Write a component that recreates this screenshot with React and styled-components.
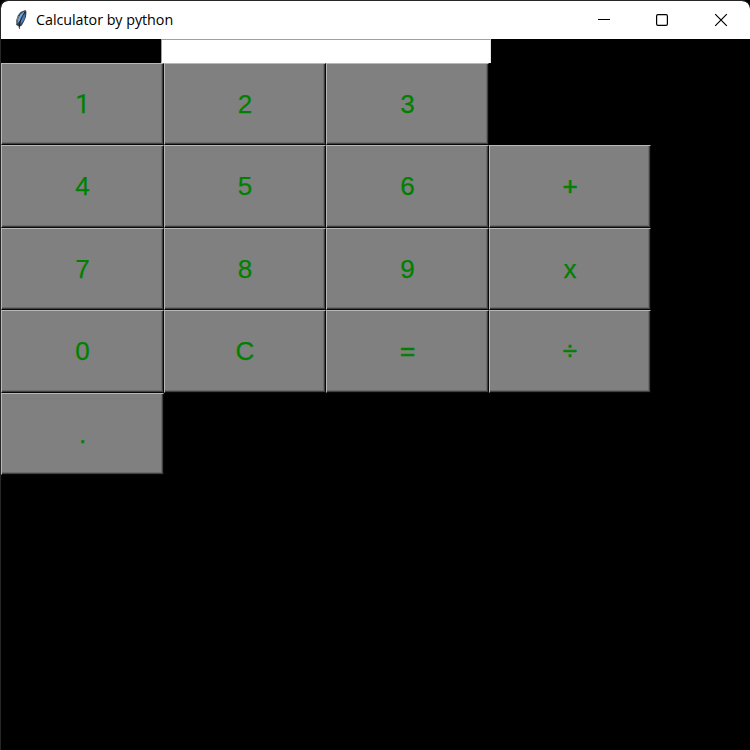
import React from "react";
import styled, { createGlobalStyle } from "styled-components";

const GlobalStyle = createGlobalStyle`
  * { box-sizing: border-box; }
  body { margin: 0; background: #000; overflow: hidden; }
`;

const Window = styled.main`
  display: flex;
  flex-direction: column;
  width: 750px;
  height: 750px;
  background: #000;
  border-left: 1px solid #262626;
  border-top: 1px solid #262626;
  border-radius: 8px 8px 0 0;
  overflow: hidden;
`;

const TitleBar = styled.header`
  display: flex;
  align-items: center;
  flex: none;
  height: 38px;
  padding-left: 12px;
  background: #fff;
  border-radius: 7px 8px 0 0;
`;

const Title = styled.h1`
  flex: 1;
  margin: 0 0 0 7px;
  font: 400 14.3px/20px "Open Sans", "Noto Sans", sans-serif;
  letter-spacing: -0.03px;
  color: #000;
  white-space: nowrap;
`;

const Controls = styled.div`
  display: flex;
`;

const Control = styled.button`
  display: flex;
  align-items: center;
  justify-content: center;
  width: ${(p) => p.$width}px;
  height: 38px;
  padding: 0;
  border: 0;
  background: none;
`;

const Body = styled.section`
  display: flex;
  flex-direction: column;
  align-items: flex-start;
  flex: 1;
`;

const Display = styled.input`
  width: 330px;
  height: 24px;
  margin-left: 160px;
  padding: 0 4px;
  border: 1px solid;
  border-color: #a0a0a0 #e3e3e3 #fff #a0a0a0;
  border-radius: 0;
  outline: 0;
  background: #fff;
`;

const Keypad = styled.div`
  display: grid;
  grid-template-columns: 163px 162px 163px 162px;
  grid-template-rows: 82px 83px 82px 83px 82px;
`;

const Key = styled.button`
  grid-column: ${(p) => p.$col};
  grid-row: ${(p) => p.$row};
  display: flex;
  align-items: center;
  justify-content: center;
  padding: 0 0 1px;
  border: 1px solid;
  border-color: #b8b8b8 #080808 #080808 #b8b8b8;
  border-radius: 0;
  box-shadow: inset -1px -1px #404040, inset -2px -2px #6c6c6c;
  background: #808080;
  color: #008000;
  font: 400 26px/30px ${(p) => (p.$plainStem ? "Roboto," : "")} "Liberation Sans", Arial, sans-serif;
  -webkit-text-stroke: ${(p) => (p.$operator ? 0.6 : 0.25)}px #008000;
`;

const keys = [
  ["1", "2", "3"],
  ["4", "5", "6", "+"],
  ["7", "8", "9", "x"],
  ["0", "C", "=", "÷"],
  ["."],
];

const Feather = () => (
  <svg width="16" height="22" viewBox="0 0 16 22">
    <path d="M6.2 20 5.6 17.2 3.2 16 3.2 11.5 4.8 6.5 7.6 3 12.4 1 13.5 2.8 13 8 10.9 12.7 8.8 16.5 7 17.5Z" fill="#34424e" />
    <path d="M4.6 14.5 4.8 10.5 7.6 5 11.6 2.2 10.5 6.5 7.2 11.2Z" fill="#6fa4dc" />
    <path d="m7.5 15.2.5-4 4-6.5-.2 4-2 4Z" fill="#4d80b8" />
    <path d="M11.8 3 8.4 9 6.5 14.5V20" fill="none" stroke="#111b24" strokeWidth=".9" />
    <path d="m3.6 15 .2-4 2-4.2M5.8 17.5l1 2.4" fill="none" stroke="#8b8177" strokeWidth=".9" />
  </svg>
);

export default function App() {
  return (
    <>
      <GlobalStyle />
      <Window>
        <TitleBar>
          <Feather />
          <Title>Calculator by python</Title>
          <Controls>
            <Control aria-label="Minimize" $width={56}>
              <svg width="14" height="14" viewBox="0 0 14 14">
                <path d="M1 6.5h12" stroke="#000" />
              </svg>
            </Control>
            <Control aria-label="Maximize" $width={60}>
              <svg width="14" height="14" viewBox="0 0 14 14">
                <rect x="1.6" y="1.6" width="10.8" height="10.8" rx="1.3" fill="none" stroke="#000" strokeWidth="1.2" />
              </svg>
            </Control>
            <Control aria-label="Close" $width={58}>
              <svg width="14" height="14" viewBox="0 0 14 14">
                <path d="m1.2 1.2 11.6 11.6M12.8 1.2 1.2 12.8" stroke="#000" strokeWidth="1.2" />
              </svg>
            </Control>
          </Controls>
        </TitleBar>
        <Body>
          <Display aria-label="Display" />
          <Keypad>
            {keys.map((row, r) =>
              row.map((label, c) => (
                <Key
                  key={label}
                  $row={r + 1}
                  $col={c + 1}
                  $plainStem={label === "1"}
                  $operator={"+÷=".includes(label)}
                >
                  {label}
                </Key>
              ))
            )}
          </Keypad>
        </Body>
      </Window>
    </>
  );
}
